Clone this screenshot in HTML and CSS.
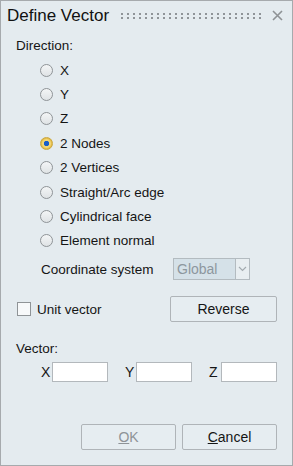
FILE: index.html
```html
<!DOCTYPE html>
<html lang="en">
<head>
    <meta charset="UTF-8">
    <title>Define Vector</title>
    <link rel="stylesheet" href="styles.css">
</head>
<body>
    <div class="dialog">
        <!-- title bar -->
        <div class="titlebar">
            <span class="title">Define Vector</span>
            <span class="grip"></span>
            <svg class="close" width="11" height="11" viewBox="0 0 11 11" stroke="#8e9295" stroke-width="1.6">
                <path d="M1 1L10 10M10 1L1 10"/>
            </svg>
        </div>

        <div class="content">
            <div class="section-label">Direction:</div>

            <div class="radios">
                <label class="radio-row"><span class="radio"></span>X</label>
                <label class="radio-row"><span class="radio"></span>Y</label>
                <label class="radio-row"><span class="radio"></span>Z</label>
                <label class="radio-row"><span class="radio checked"></span>2 Nodes</label>
                <label class="radio-row"><span class="radio"></span>2 Vertices</label>
                <label class="radio-row"><span class="radio"></span>Straight/Arc edge</label>
                <label class="radio-row"><span class="radio"></span>Cylindrical face</label>
                <label class="radio-row"><span class="radio"></span>Element normal</label>
            </div>

            <div class="coord-row">
                <span class="coord-label">Coordinate system</span>
                <div class="select">
                    <span class="select-value">Global</span>
                    <span class="select-arrow">
                        <svg width="9" height="6" viewBox="0 0 9 6" fill="none" stroke="#a3abb0" stroke-width="1.2">
                            <path d="M1 1L4.5 4.5L8 1"/>
                        </svg>
                    </span>
                </div>
            </div>

            <div class="unit-row">
                <label class="check-row"><span class="checkbox"></span>Unit vector</label>
                <button class="btn reverse">Reverse</button>
            </div>

            <div class="section-label vector-label">Vector:</div>

            <div class="vector-row">
                <span class="axis">X</span><input class="field" type="text">
                <span class="axis">Y</span><input class="field" type="text">
                <span class="axis">Z</span><input class="field" type="text">
            </div>
        </div>

        <div class="footer">
            <button class="btn ok" disabled><u>O</u>K</button>
            <button class="btn"><u>C</u>ancel</button>
        </div>
    </div>
</body>
</html>
```

FILE: styles.css
```css
body {
    margin: 0;
    font-family: 'Liberation Sans', Arial, sans-serif;
    font-size: 13.5px;
    color: #151515;
}

.dialog {
    width: 293px;
    height: 466px;
    box-sizing: border-box;
    border: 1px solid #a6aaad;
    background: #e4ebef;
    display: flex;
    flex-direction: column;
}

/* title bar */
.titlebar {
    height: 28px;
    display: flex;
    align-items: center;
    padding: 0 6px 0 6px;
}

.title {
    font-size: 17px;
    color: #111;
    margin-top: 1px;
}

.grip {
    flex: 1;
    height: 8px;
    margin: 1px 9px 0 10px;
    background-image: radial-gradient(circle, #8f9498 1px, transparent 1.3px);
    background-size: 6px 4px;
}

.close {
    margin-right: 3px;
}

.content {
    flex: 1;
    padding: 9px 15px 0 15px;
}

.section-label {
    height: 16px;
    line-height: 16px;
}

.radios {
    margin-top: 4px;
    padding-left: 24px;
}

.radio-row {
    height: 24.4px;
    display: flex;
    align-items: center;
    gap: 7px;
}

.radio {
    width: 11px;
    height: 11px;
    border-radius: 50%;
    border: 1px solid #8f9497;
    background: linear-gradient(#f3f5f6, #dfe3e5);
}

.radio.checked {
    border-color: #c9a640;
    background: radial-gradient(circle, #1a5ec9 2.4px, #f2d677 3px, #f2d677 4px, #e6be4a 5px);
}

.coord-row {
    display: flex;
    align-items: center;
    margin-top: 5px;
    padding-left: 25px;
}

.coord-label {
    width: 132px;
}

.select {
    width: 75px;
    height: 20px;
    border: 1px solid #b3bbc0;
    display: flex;
    background: #d5e1e8;
}

.select-value {
    flex: 1;
    color: #8d979e;
    font-size: 14px;
    line-height: 20px;
    padding-left: 3px;
}

.select-arrow {
    width: 13px;
    border-left: 1px solid #b3bbc0;
    background: #e8eef1;
    display: grid;
    place-items: center;
}

.unit-row {
    display: flex;
    align-items: center;
    justify-content: space-between;
    margin-top: 16px;
    padding-left: 1px;
}

.check-row {
    display: flex;
    align-items: center;
    gap: 6px;
}

.checkbox {
    width: 12px;
    height: 12px;
    border: 1px solid #8f9497;
    background: #f7f9fa;
}

.btn {
    font-family: inherit;
    font-size: 14px;
    color: #151515;
    background: #e6edf1;
    border: 1px solid #afb4b8;
    border-radius: 2px;
    width: 95px;
    height: 26px;
    padding: 0;
}

.reverse {
    width: 107px;
}

.btn:disabled {
    color: #8e9397;
}

.vector-label {
    margin-top: 19px;
}

.vector-row {
    display: flex;
    align-items: center;
    margin-top: 5px;
    padding-left: 25px;
}

.axis {
    width: 13px;
    font-size: 14px;
}

.field {
    width: 56px;
    height: 20px;
    box-sizing: border-box;
    border: 1px solid #b3b8bc;
    background: #fff;
    padding: 0;
    margin-right: 17px;
}

.field:last-child {
    margin-right: 0;
}

.vector-row .axis:nth-of-type(3) {
    width: 14px;
}

.footer {
    display: flex;
    justify-content: flex-end;
    gap: 6px;
    padding: 0 15px 15px 0;
}
```
